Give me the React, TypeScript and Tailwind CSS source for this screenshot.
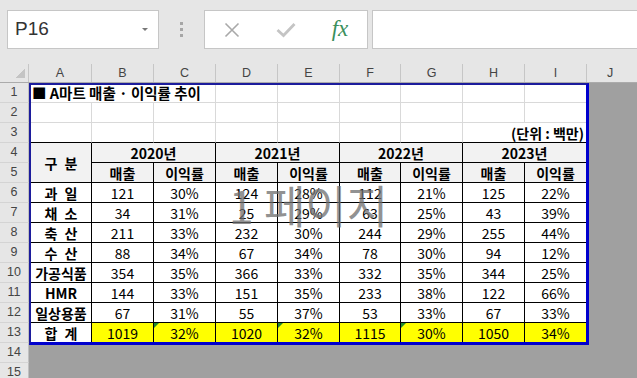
import React from 'react';

type Row = [string, number, string, number, string, number, string, number, string];

const ROWS: Row[] = [
    ['과일', 121, '30%', 124, '28%', 112, '21%', 125, '22%'],
    ['채소', 34, '31%', 25, '29%', 63, '25%', 43, '39%'],
    ['축산', 211, '33%', 232, '30%', 244, '29%', 255, '44%'],
    ['수산', 88, '34%', 67, '34%', 78, '30%', 94, '12%'],
    ['가공식품', 354, '35%', 366, '33%', 332, '35%', 344, '25%'],
    ['HMR', 144, '33%', 151, '35%', 233, '38%', 122, '66%'],
    ['일상용품', 67, '31%', 55, '37%', 53, '33%', 67, '33%'],
];

const TOTAL: Row = ['합계', 1019, '32%', 1020, '32%', 1115, '30%', 1050, '34%'];

const COL_HEADS = [
    { l: 'A', w: 'w-[63px]' },
    { l: 'B', w: 'w-[62px]' },
    { l: 'C', w: 'w-[62px]' },
    { l: 'D', w: 'w-[62px]' },
    { l: 'E', w: 'w-[62px]' },
    { l: 'F', w: 'w-[61px]' },
    { l: 'G', w: 'w-[62px]' },
    { l: 'H', w: 'w-[62px]' },
    { l: 'I', w: 'w-[62px]' },
];

const YEARS = ['2020년', '2021년', '2022년', '2023년'];

const UI = "font-['Liberation_Sans',Arial,sans-serif]";
const KR = "font-['Noto_Sans_CJK_KR','Noto_Sans',sans-serif]";

// 두 글자 항목은 엑셀의 균등 분할처럼 벌려서 표시
const Label = ({ text }: { text: string }) =>
    text.length === 2 ? <span className="tracking-[7px] pl-[7px]">{text}</span> : <span>{text}</span>;

const Triangle = () => (
    <span className="absolute top-0 left-0 w-0 h-0 border-t-[5px] border-r-[5px] border-t-[#1f8a2e] border-r-transparent" />
);

export default function App() {
    return (
        <div className={`w-[637px] h-[378px] overflow-hidden bg-[#e6e6e6] ${UI}`}>
            {/* 수식 입력줄 */}
            <div className="h-[64px] flex items-start pt-[10px]">
                <div className="ml-[7px] w-[152px] h-[39px] border border-[#c6c6c6] bg-white flex items-center justify-between pl-[7px] pr-[10px]">
                    <span className="text-[19px] text-[#333]">P16</span>
                    <span className="w-0 h-0 border-l-[3px] border-r-[3px] border-t-[3px] border-l-transparent border-r-transparent border-t-[#777]" />
                </div>
                <div className="w-[45px] h-[39px] flex flex-col items-center justify-center gap-[3px]">
                    <span className="w-[3px] h-[3px] bg-[#a6a6a6]" />
                    <span className="w-[3px] h-[3px] bg-[#a6a6a6]" />
                    <span className="w-[3px] h-[3px] bg-[#a6a6a6]" />
                </div>
                <div className="w-[164px] h-[39px] border border-[#c6c6c6] bg-white grid grid-cols-[54px_54px_54px] items-center justify-items-center">
                    <svg width="16" height="16" viewBox="0 0 16 16" fill="none">
                        <path d="M1.5 1.5 L14.5 14.5 M14.5 1.5 L1.5 14.5" stroke="#a9a9a9" strokeWidth="1.6" />
                    </svg>
                    <svg width="20" height="16" viewBox="0 0 20 16" fill="none">
                        <path d="M1.5 8 L7.5 13.5 L18.5 2" stroke="#c4c4c4" strokeWidth="2.8" />
                    </svg>
                    <span className="font-['Liberation_Serif',serif] italic text-[23px] leading-none text-[#3a8f5c] pb-[2px]">
                        fx
                    </span>
                </div>
                <div className="ml-[4px] flex-1 h-[39px] border border-[#c6c6c6] bg-white -mr-[2px]" />
            </div>

            {/* 열 머리글 */}
            <div className="h-[19px] flex border-b border-[#ababab] text-[12.5px] text-[#444]">
                <div className="w-[29px] h-full border-r border-[#c6c6c6] flex items-end justify-end pr-[3px] pb-[4px]">
                    <span className="w-[10px] h-[10px] bg-[linear-gradient(135deg,transparent_50%,#c4c4c4_50%)]" />
                </div>
                {COL_HEADS.map(c => (
                    <div key={c.l} className={`${c.w} h-full border-r border-[#c6c6c6] flex items-center justify-center`}>
                        {c.l}
                    </div>
                ))}
                <div className="flex-1 h-full flex items-center justify-center pr-[4px]">J</div>
            </div>

            {/* 시트 본문 */}
            <div className="flex h-[295px]">
                <div className="w-[29px] flex flex-col text-[12.5px] text-[#444]">
                    {Array.from({ length: 15 }, (_, i) => (
                        <div
                            key={i}
                            className="h-[20px] shrink-0 border-b border-r border-b-[#d4d4d4] border-r-[#c0c0c0] flex items-center justify-center"
                        >
                            {i + 1}
                        </div>
                    ))}
                </div>

                <div className="flex-1 bg-[#a0a0a0]">
                    <div
                        className={`relative w-[560px] h-[262px] border-l-2 border-t-2 border-r-[3px] border-b-[3px] border-l-[#1c1c9c] border-t-[#1c1c9c] border-r-[#0000cd] border-b-[#0000cd] bg-white grid grid-cols-[61px_62px_62px_62px_62px_61px_62px_62px_61px] grid-rows-[18px_repeat(11,20px)_19px] text-[14px] leading-none text-black ${KR}`}
                    >
                        {/* 1행 */}
                        <div className="col-span-3 border-r border-b border-[#d9d9d9] flex items-center pl-[1px] font-bold whitespace-nowrap text-[14.5px]">
                            ■ A마트 매출 · 이익률 추이
                        </div>
                        {[0, 1, 2, 3, 4].map(i => (
                            <div key={i} className="border-r border-b border-[#d9d9d9]" />
                        ))}
                        <div className="border-b border-[#d9d9d9]" />

                        {/* 2행 */}
                        {[0, 1, 2, 3, 4, 5, 6, 7].map(i => (
                            <div key={i} className="border-r border-b border-[#d9d9d9]" />
                        ))}
                        <div className="border-b border-[#d9d9d9]" />

                        {/* 3행 */}
                        {[0, 1, 2, 3, 4, 5, 6].map(i => (
                            <div key={i} className="border-r border-b border-r-[#d9d9d9] border-b-black" />
                        ))}
                        <div className="col-span-2 border-b border-black flex items-center justify-end pr-[2px] font-bold">
                            (단위 : 백만)
                        </div>

                        {/* 4~5행 머리글 */}
                        <div className="row-span-2 border-r border-b border-black bg-[#f2f2f2] flex items-center justify-center font-bold">
                            <Label text="구분" />
                        </div>
                        {YEARS.map((y, i) => (
                            <div
                                key={y}
                                className={`col-span-2 border-b border-black bg-[#f2f2f2] flex items-center justify-center font-bold ${
                                    i < 3 ? 'border-r' : ''
                                }`}
                            >
                                {y}
                            </div>
                        ))}
                        {[0, 1, 2, 3, 4, 5, 6, 7].map(i => (
                            <div
                                key={i}
                                className={`border-b border-black bg-[#f2f2f2] flex items-center justify-center font-bold ${
                                    i < 7 ? 'border-r' : ''
                                }`}
                            >
                                {i % 2 === 0 ? '매출' : '이익률'}
                            </div>
                        ))}

                        {/* 데이터 */}
                        {ROWS.map(r => (
                            <React.Fragment key={r[0]}>
                                <div className="border-r border-b border-black flex items-center justify-center font-bold">
                                    <Label text={r[0]} />
                                </div>
                                {r.slice(1).map((v, i) => (
                                    <div
                                        key={i}
                                        className={`border-b border-black flex items-center justify-center ${
                                            i < 7 ? 'border-r' : ''
                                        }`}
                                    >
                                        {v}
                                    </div>
                                ))}
                            </React.Fragment>
                        ))}

                        {/* 합계 */}
                        <div className="border-r border-black flex items-center justify-center font-bold">
                            <Label text={TOTAL[0]} />
                        </div>
                        {TOTAL.slice(1).map((v, i) => (
                            <div
                                key={i}
                                className={`relative bg-[#ffff00] border-black flex items-center justify-center ${
                                    i < 7 ? 'border-r' : ''
                                }`}
                            >
                                {i === 1 || i === 3 || i === 5 ? <Triangle /> : null}
                                {v}
                            </div>
                        ))}

                        {/* 페이지 나누기 미리 보기 워터마크 */}
                        <div className="absolute inset-0 flex items-center justify-center pb-[18px] pointer-events-none">
                            <span className="text-[45px] leading-none font-normal text-[#6e6e6e]/75">1 페이지</span>
                        </div>
                    </div>
                </div>
            </div>
        </div>
    );
}
